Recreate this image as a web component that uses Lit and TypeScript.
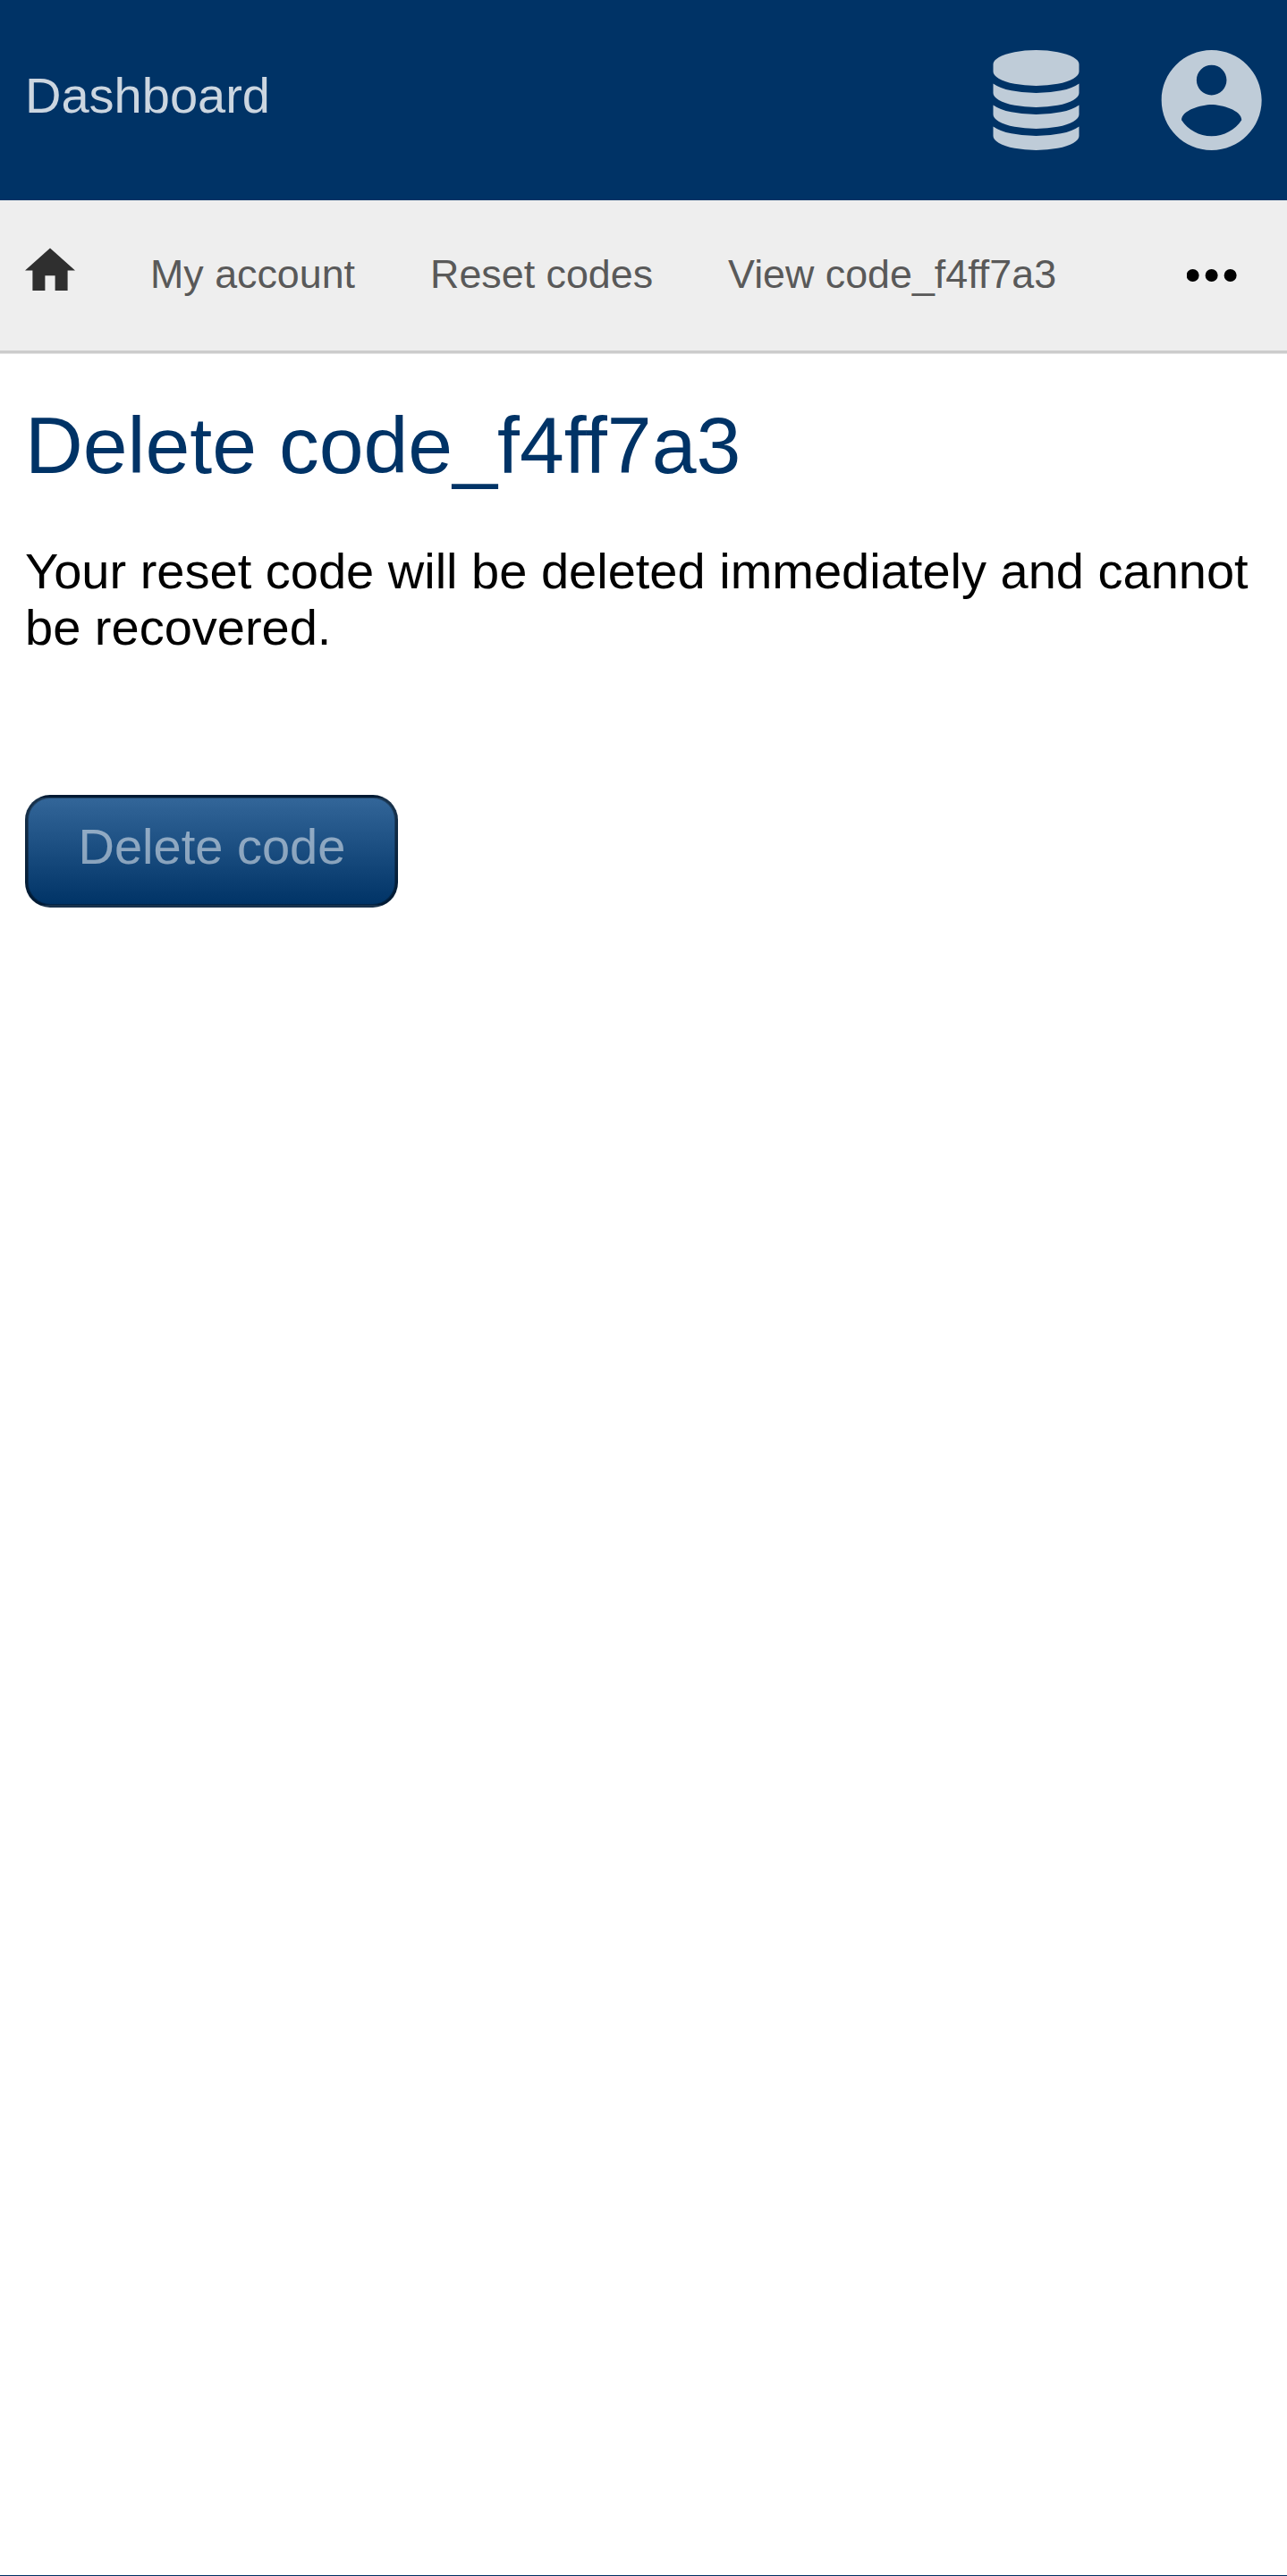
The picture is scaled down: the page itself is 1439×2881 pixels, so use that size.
import { LitElement, html, css } from "lit";
import { customElement, property } from "lit/decorators.js";

const CODE = "code_f4ff7a3";

@customElement("app-header")
class AppHeader extends LitElement {
  static styles = css`
    :host { display: block; }
    .bar {
      display: flex;
      justify-content: space-between;
      box-sizing: border-box;
      height: 224px;
      padding: 0 28px;
      background: #003366;
    }
    .title {
      padding-top: 75px;
      font-size: 56px;
      line-height: 63px;
      color: #ccd6e0;
      text-decoration: none;
    }
    .actions { display: flex; align-items: center; gap: 84px; }
    .icon { display: block; width: 112px; height: 112px; fill: #bfccd8; }
  `;
  render() {
    return html`
      <header class="bar">
        <a class="title">Dashboard</a>
        <div class="actions">
          <svg class="icon" viewBox="-120 0 1792 1792">
            <path d="M768 768q237 0 443-43t325-127v170q0 69-103 128t-280 93.500-385 34.500-385-34.500-280-93.500-103-128v-170q119 84 325 127t443 43zm0 768q237 0 443-43t325-127v170q0 69-103 128t-280 93.500-385 34.500-385-34.500-280-93.500-103-128v-170q119 84 325 127t443 43zm0-384q237 0 443-43t325-127v170q0 69-103 128t-280 93.500-385 34.500-385-34.500-280-93.500-103-128v-170q119 84 325 127t443 43zm0-1152q208 0 385 34.500t280 93.500 103 128v128q0 69-103 128t-280 93.500-385 34.500-385-34.500-280-93.500-103-128v-128q0-69 103-128t280-93.500 385-34.500z"/>
          </svg>
          <svg class="icon" viewBox="2.060 2 20 20" overflow="visible">
            <path d="M12 2C6.480 2 2 6.480 2 12s4.480 10 10 10 10-4.480 10-10S17.520 2 12 2zm0 3c1.660 0 3 1.340 3 3s-1.340 3-3 3-3-1.340-3-3 1.340-3 3-3zm0 14.200c-2.500 0-4.710-1.280-6-3.220.030-1.990 4-3.080 6-3.080 1.990 0 5.970 1.090 6 3.080-1.290 1.940-3.500 3.220-6 3.220z"/>
          </svg>
        </div>
      </header>
    `;
  }
}

@customElement("app-nav")
class AppNav extends LitElement {
  @property({ attribute: false }) items: string[] = [];
  static styles = css`
    :host { display: block; }
    .bar {
      display: flex;
      align-items: flex-start;
      gap: 84px;
      box-sizing: border-box;
      height: 171px;
      padding: 0 56px 0 28px;
      background: #eeeeee;
      border-bottom: 3px solid #cccccc;
      box-shadow: 0 1px 0 #e5e5e5;
    }
    .home { flex: none; width: 56px; height: 48px; margin-top: 53px; fill: #2f2f2f; }
    .link {
      margin-top: 57px;
      font-size: 44.8px;
      line-height: 50px;
      color: #595959;
      white-space: nowrap;
      text-decoration: none;
    }
    .more { flex: none; width: 56px; height: 56px; margin: 56px 0 0 auto; fill: #000; }
  `;
  render() {
    return html`
      <nav class="bar">
        <svg class="home" viewBox="2 2.857 20 17.143"><path d="M10 20v-6h4v6h5v-8h3L12 3 2 12h3v8z"/></svg>
        ${this.items.map((t) => html`<a class="link">${t}</a>`)}
        <svg class="more" viewBox="4.100 4 16 16">
          <circle cx="6" cy="12" r="2"/><circle cx="12" cy="12" r="2"/><circle cx="18" cy="12" r="2"/>
        </svg>
      </nav>
    `;
  }
}

@customElement("app-root")
class AppRoot extends LitElement {
  static styles = css`
    :host {
      display: flex;
      flex-direction: column;
      box-sizing: border-box;
      height: 2881px;
      background: #fff;
      border-bottom: 1px solid #003366;
      font-family: "Liberation Sans", Arial, sans-serif;
    }
    .main {
      display: flex;
      flex-direction: column;
      align-items: flex-start;
      padding: 53px 28px 0;
    }
    .heading { margin: 0; font-size: 89.6px; line-height: 100px; font-weight: 400; color: #003366; }
    .text { margin: 59px 0 0; font-size: 56px; line-height: 63px; color: #000; }
    .button {
      box-sizing: border-box;
      height: 126px;
      margin: 156px 0 0;
      padding: 23px 55.500px 0 56.500px;
      border: 3px solid rgba(0, 0, 0, 0.5);
      border-radius: 28px;
      background: linear-gradient(#336699, #003366);
      box-shadow: inset 0 0 0 1px rgba(0, 0, 0, 0.3);
      font-size: 56px;
      line-height: 63px;
      color: rgba(255, 255, 255, 0.5);
    }
  `;
  render() {
    return html`
      <app-header></app-header>
      <app-nav .items=${["My account", "Reset codes", `View ${CODE}`]}></app-nav>
      <main class="main">
        <h1 class="heading">Delete ${CODE}</h1>
        <p class="text">Your reset code will be deleted immediately and cannot be recovered.</p>
        <div class="button" role="button" aria-disabled="true">Delete code</div>
      </main>
    `;
  }
}
